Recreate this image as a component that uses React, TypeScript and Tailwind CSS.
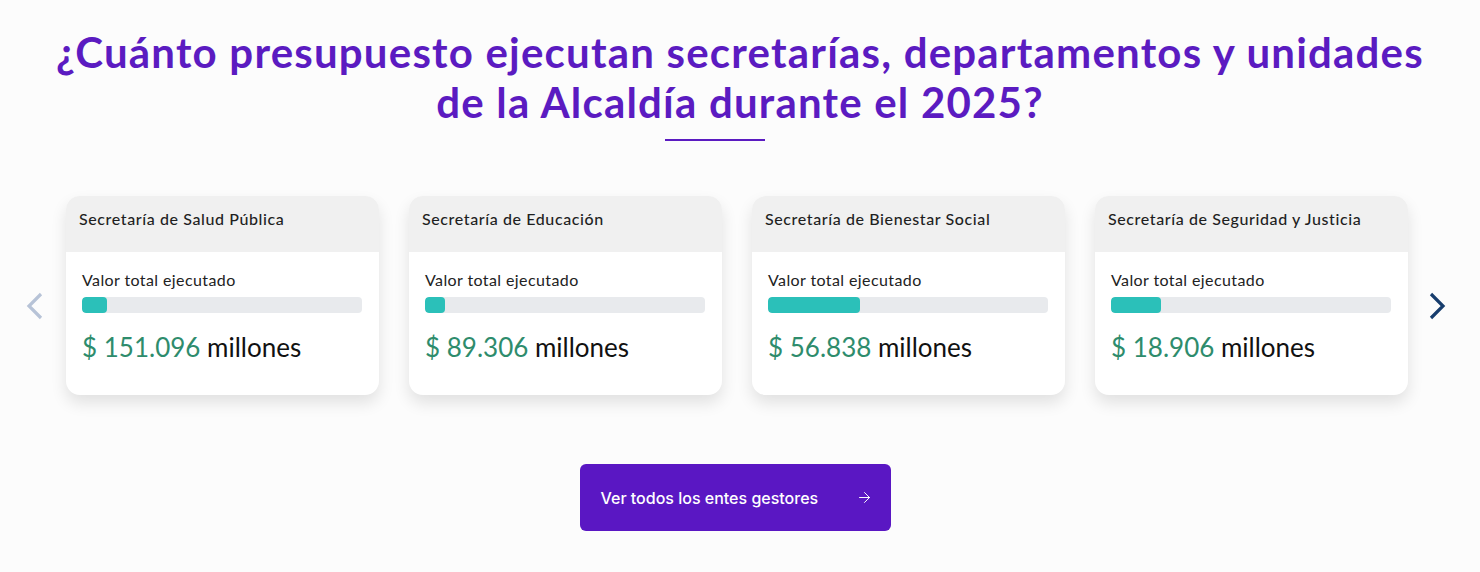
import { ArrowRight } from "lucide-react";

type Ente = {
  nombre: string;
  valor: string;
  pct: number;
};

const entes: Ente[] = [
  { nombre: "Secretaría de Salud Pública", valor: "151.096", pct: 9 },
  { nombre: "Secretaría de Educación", valor: "89.306", pct: 7 },
  { nombre: "Secretaría de Bienestar Social", valor: "56.838", pct: 33 },
  { nombre: "Secretaría de Seguridad y Justicia", valor: "18.906", pct: 18 },
];

const Chevron = ({ dir, color }: { dir: "left" | "right"; color: string }) => (
  <svg width="18" height="30" viewBox="0 0 18 30" fill="none">
    <polyline
      points={dir === "left" ? "15,3 3,15 15,27" : "3,3 15,15 3,27"}
      stroke={color}
      strokeWidth="3.2"
      strokeLinecap="butt"
      strokeLinejoin="miter"
    />
  </svg>
);

const EnteCard = ({ ente }: { ente: Ente }) => (
  <div className="w-[313px] h-[199px] shrink-0 rounded-[14px] bg-white overflow-hidden shadow-[0_8px_16px_rgba(0,0,0,0.11)]">
    <div className="h-[56px] bg-[#f0f0f0] px-[13px] pt-[11px] text-[16px] tracking-[0.6px] font-medium text-[#1f1f1f]">
      {ente.nombre}
    </div>
    <div className="px-[16px] pt-[18px]">
      <p className="text-[16px] tracking-[0.4px] text-[#222] leading-[20px]">Valor total ejecutado</p>
      <div className="mt-[7px] h-[16px] w-[280px] rounded-[4px] bg-[#e8eaed] overflow-hidden">
        <div className="h-full rounded-[4px] bg-[#2bc0b9]" style={{ width: `${ente.pct}%` }} />
      </div>
      <p className="mt-[17px] text-[26px] leading-[34px] text-[#111]">
        <span className="text-[#2e8c6c]">$ {ente.valor}</span> millones
      </p>
    </div>
  </div>
);

export default function App() {
  return (
    <div className="w-full h-[572px] bg-[#fcfcfc] flex flex-col items-center font-['Lato',sans-serif]">
      <h2 className="mt-[27px] text-center text-[42px] leading-[50px] font-bold text-[#5b1bc1] tracking-[1.2px]">
        ¿Cuánto presupuesto ejecutan secretarías, departamentos y unidades
        <br />
        de la Alcaldía durante el 2025?
      </h2>
      <div className="mt-[12px] mr-[50px] h-[2px] w-[100px] bg-[#5b1bc1]" />

      <div className="mt-[55px] w-full flex items-start pl-[15px]">
        <button className="mt-[95px] w-10 h-[30px] flex items-center justify-center">
          <Chevron dir="left" color="#b7c3d7" />
        </button>
        <div className="ml-[11px] flex gap-[30px]">
          {entes.map((e) => (
            <EnteCard key={e.nombre} ente={e} />
          ))}
        </div>
        <button className="ml-[9px] mt-[95px] w-10 h-[30px] flex items-center justify-center">
          <Chevron dir="right" color="#173d6d" />
        </button>
      </div>

      <button className="mt-[69px] mr-[10px] w-[311px] h-[67px] rounded-[6px] bg-[#5a17c3] pl-[21px] pr-[18px] flex items-center justify-between text-white text-[16px] font-['Inter',sans-serif] font-medium">
        <span>Ver todos los entes gestores</span>
        <ArrowRight size={17} strokeWidth={1.4} />
      </button>
    </div>
  );
}
